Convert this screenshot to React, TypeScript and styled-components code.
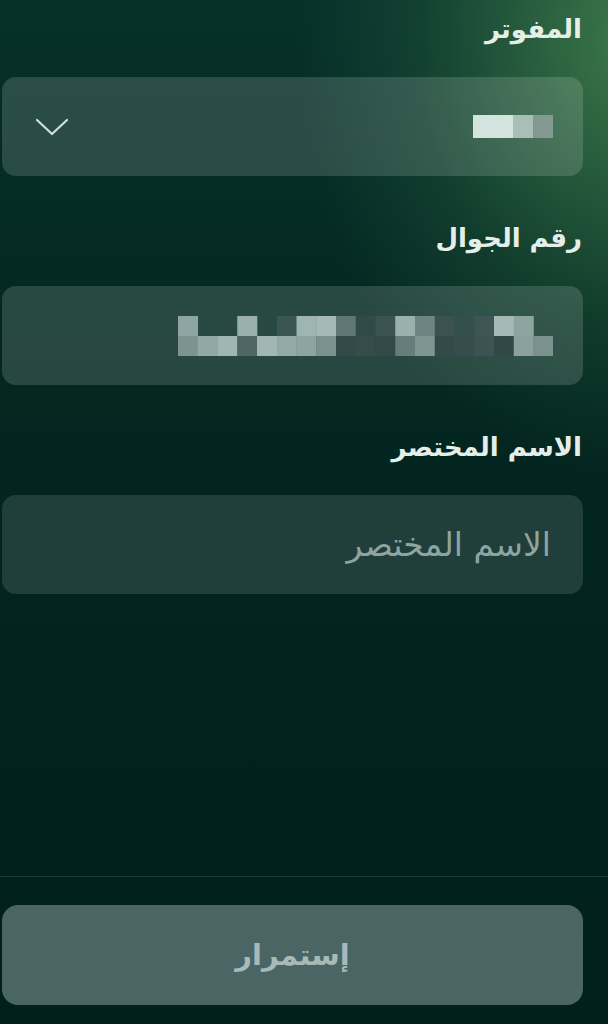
import styled, { createGlobalStyle } from "styled-components";

const GlobalStyle = createGlobalStyle`
  * {
    box-sizing: border-box;
  }
  body {
    margin: 0;
    background: #02221f;
    font-family: "DejaVu Sans", "Noto Sans", sans-serif;
  }
`;

const Page = styled.div`
  direction: rtl;
  min-height: 100vh;
  display: flex;
  flex-direction: column;
  background:
    radial-gradient(ellipse 430px 560px at 104% 4%, rgba(74, 138, 82, 0.8), rgba(40, 96, 64, 0.35) 50%, transparent 78%),
    linear-gradient(180deg, #06302a 0%, #03261f 40%, #02221f 70%, #01201d 100%);
`;

const Form = styled.div`
  display: flex;
  flex-direction: column;
  gap: 41px;
  padding: 8px 25px 0 2px;
`;

const Field = styled.div`
  display: flex;
  flex-direction: column;
  gap: 27px;
`;

const Label = styled.label`
  color: #e4efea;
  font-size: 26px;
  font-weight: 700;
  line-height: 42px;
  padding-right: 1px;
`;

const Box = styled.div<{ $strong?: boolean }>`
  height: 99px;
  border-radius: 14px;
  background: ${({ $strong }) => ($strong ? "rgba(255, 255, 255, 0.15)" : "rgba(255, 255, 255, 0.12)")};
  display: flex;
  align-items: center;
  justify-content: space-between;
  padding: 0 30px 0 33px;
`;

const Placeholder = styled.span`
  color: #8ea4a1;
  font-size: 33px;
  line-height: 1;
  padding-right: 2px;
`;

const Footer = styled.div`
  margin-top: auto;
  border-top: 1px solid #1d3d39;
  padding: 28px 25px 19px 2px;
`;

const Button = styled.button`
  width: 100%;
  height: 100px;
  border: none;
  border-radius: 16px;
  background: #4b6564;
  color: #a8bab8;
  font-family: "DejaVu Sans", sans-serif;
  font-size: 29px;
  font-weight: 700;
`;

const phoneRows = [
  ["#8fa5a3", null, null, "#9ab0ad", null, "#3a5552", "#9fb5b2", "#a5bab7", "#5f7774", "#2f4a47", "#3a5250", "#9ab0ad", "#6c8582", "#3a5250", "#34504d", "#3d5654", "#a5bab7", "#8ea4a1", null],
  ["#7c9390", "#92a8a5", "#a0b6b3", "#4e6764", "#a2b7b4", "#94aaa7", "#8ea4a1", "#7a918e", "#32494a", "#354c4b", "#33494a", "#667e7b", "#7e9592", "#33494a", "#354d4c", "#3b5352", "#304846", "#8ba19e", "#7a918e"],
];

function PhoneBlur() {
  const size = 19.75;
  return (
    <svg width={375} height={40} viewBox="0 0 375 40">
      {phoneRows.map((row, r) =>
        row.map((c, i) =>
          c ? <rect key={`${r}-${i}`} x={i * size} y={r * 20} width={size + 0.3} height={20} fill={c} /> : null
        )
      )}
    </svg>
  );
}

function BillerBlur() {
  return (
    <svg width={80} height={23} viewBox="0 0 80 23">
      <rect x={0} y={0} width={40} height={23} fill="#d2e4dd" />
      <rect x={40} y={0} width={20} height={23} fill="#a9beb7" />
      <rect x={60} y={0} width={20} height={23} fill="#84998f" />
    </svg>
  );
}

function Chevron() {
  return (
    <svg width={34} height={20} viewBox="0 0 34 20" fill="none">
      <path d="M2 3 L17 17 L32 3" stroke="#d3ded9" strokeWidth={2.2} strokeLinecap="round" strokeLinejoin="round" />
    </svg>
  );
}

export default function App() {
  return (
    <Page>
      <GlobalStyle />
      <Form>
        <Field>
          <Label>المفوتر</Label>
          <Box $strong>
            <BillerBlur />
            <Chevron />
          </Box>
        </Field>
        <Field>
          <Label>رقم الجوال</Label>
          <Box $strong>
            <PhoneBlur />
          </Box>
        </Field>
        <Field>
          <Label>الاسم المختصر</Label>
          <Box>
            <Placeholder>الاسم المختصر</Placeholder>
          </Box>
        </Field>
      </Form>
      <Footer>
        <Button>إستمرار</Button>
      </Footer>
    </Page>
  );
}
